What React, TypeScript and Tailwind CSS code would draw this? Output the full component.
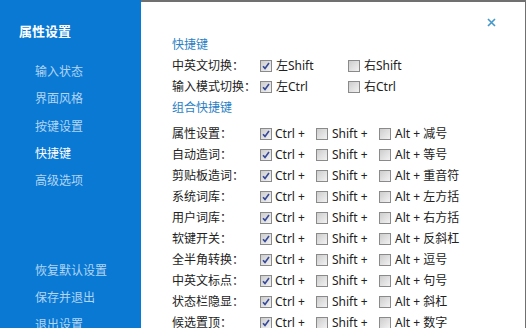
import React from "react";

const FONT = { fontFamily: '"Noto Sans", "Noto Sans CJK SC", sans-serif' };

function Box({ checked }: { checked?: boolean }) {
  return (
    <span className="relative inline-block w-[12px] h-[12px] shrink-0 border border-[#8a8a8a] bg-gradient-to-br from-[#cdcdcd] to-[#f2f2f2]">
      {checked && (
        <svg className="absolute left-[1px] top-[1px]" width="8" height="8" viewBox="0 0 8 8">
          <path d="M1 4.2 L3 6.4 L7 1" fill="none" stroke="#35489a" strokeWidth="1.6" />
        </svg>
      )}
    </span>
  );
}

const combos: [string, string][] = [
  ["属性设置：", "减号"],
  ["自动造词：", "等号"],
  ["剪贴板造词：", "重音符"],
  ["系统词库：", "左方括"],
  ["用户词库：", "右方括"],
  ["软键开关：", "反斜杠"],
  ["全半角转换：", "逗号"],
  ["中英文标点：", "句号"],
  ["状态栏隐显：", "斜杠"],
  ["候选置顶：", "数字"],
];

export default function App() {
  return (
    <div className="w-[527px] h-[328px] flex overflow-hidden bg-white pr-[1px]" style={FONT}>
      <div className="w-[141px] shrink-0 bg-[#0a79d4] flex flex-col">
        <div className="h-[20px] mt-[22px] pl-[19px] flex items-center text-[13px] font-bold text-white">属性设置</div>
        <div className="mt-[16.8px] pl-[35px] text-[12px] text-[#b1d5f3] flex flex-col">
          {["输入状态", "界面风格", "按键设置", "快捷键", "高级选项"].map((t) => (
            <div key={t} className={"h-[27.3px] flex items-center " + (t === "快捷键" ? "text-white" : "")}>{t}</div>
          ))}
          <div className="h-[62.6px]" />
          {["恢复默认设置", "保存并退出", "退出设置"].map((t) => (
            <div key={t} className="h-[27px] flex items-center">{t}</div>
          ))}
        </div>
      </div>
      <div className="flex-1 relative border-t-2 border-r border-[#707070] pl-[31px] pt-[33px] text-[12px] text-[#222222]">
        <svg className="absolute left-[346px] top-[16px]" width="9" height="9" viewBox="0 0 9 9">
          <path d="M1 1 L8 8 M8 1 L1 8" stroke="#4098cc" strokeWidth="1.6" />
        </svg>
        <div className="h-[20px] flex items-center text-[#2b7fc4]">快捷键</div>
        {[["中英文切换：", "左Shift", "右Shift"], ["输入模式切换：", "左Ctrl", "右Ctrl"]].map(([l, a, b]) => (
          <div key={l} className="h-[21px] flex items-center">
            <span className="w-[88px] shrink-0">{l}</span>
            <span className="w-[88px] shrink-0 flex items-center gap-[4px]"><Box checked />{a}</span>
            <span className="flex items-center gap-[4px]"><Box />{b}</span>
          </div>
        ))}
        <div className="h-[22px] flex items-center text-[#2b7fc4]">组合快捷键</div>
        <div className="mt-[4px]">
          {combos.map(([l, k]) => (
            <div key={l} className="h-[21.1px] flex items-center">
              <span className="w-[88px] shrink-0">{l}</span>
              <span className="w-[56px] shrink-0 flex items-center gap-[3px]"><Box checked /><span>Ctrl +</span></span>
              <span className="w-[63px] shrink-0 flex items-center gap-[4px]"><Box /><span>Shift +</span></span>
              <span className="flex items-center gap-[4px]"><Box /><span>Alt + {k}</span></span>
            </div>
          ))}
        </div>
      </div>
    </div>
  );
}
